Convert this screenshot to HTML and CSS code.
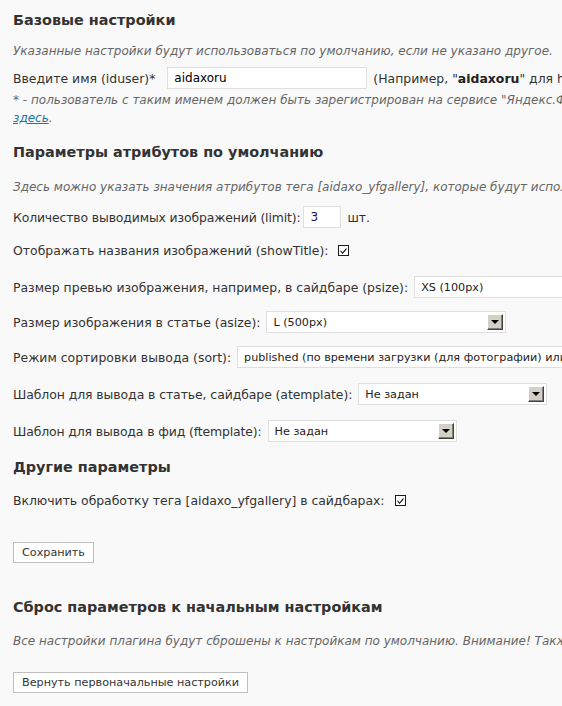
FILE: index.html
```html
<!DOCTYPE html>
<html lang="ru">
<head>
<meta charset="utf-8">
<title>Настройки</title>
<link rel="stylesheet" href="styles.css">
</head>
<body>
<div class="wrap">
  <h3 class="title t1">Базовые настройки</h3>
  <p class="desc d1">Указанные настройки будут использоваться по умолчанию, если не указано другое.</p>
  <div class="row r-user">
    <span class="label">Введите имя (iduser)*</span>
    <span class="input w-user">aidaxoru</span>
    <span class="label">(Например, "<b>aidaxoru</b>" для http://fotki.yandex.ru/users/aidaxoru/)</span>
  </div>
  <p class="desc note">* - пользователь с таким именем должен быть зарегистрирован на сервисе "Яндекс.Фотки". Зарегистрироваться можно<br><a href="#">здесь</a>.</p>

  <h3 class="title t2">Параметры атрибутов по умолчанию</h3>
  <p class="desc d2">Здесь можно указать значения атрибутов тега [aidaxo_yfgallery], которые будут использоваться по умолчанию, если они не указаны в самом теге.</p>
  <div class="row r-limit">
    <span class="label">Количество выводимых изображений (limit):</span>
    <span class="input w-limit">3</span>
    <span class="label">шт.</span>
  </div>
  <div class="row r-show">
    <span class="label">Отображать названия изображений (showTitle):</span>
    <span class="check"><svg width="11" height="11" viewBox="0 0 11 11"><rect x="0.5" y="0.5" width="10" height="10" fill="#fff" stroke="#1c1c1c"/><path d="M2.5 5 L4.5 7.5 L8.5 2.8 L8.5 4.5 L4.5 9 L2.5 6.6 Z" fill="#000"/></svg></span>
  </div>
  <div class="row r-psize">
    <span class="label">Размер превью изображения, например, в сайдбаре (psize):</span>
    <span class="select w-psize"><span class="val">XS (100px)</span><span class="arrow"></span></span>
  </div>
  <div class="row r-asize">
    <span class="label">Размер изображения в статье (asize):</span>
    <span class="select w-asize"><span class="val">L (500px)</span><span class="arrow"></span></span>
  </div>
  <div class="row r-sort">
    <span class="label">Режим сортировки вывода (sort):</span>
    <span class="select w-sort"><span class="val">published (по времени загрузки (для фотографии) или публикации (для альбома))</span><span class="arrow"></span></span>
  </div>
  <div class="row r-atpl">
    <span class="label">Шаблон для вывода в статье, сайдбаре (atemplate):</span>
    <span class="select w-tpl"><span class="val">Не задан</span><span class="arrow"></span></span>
  </div>
  <div class="row r-ftpl">
    <span class="label">Шаблон для вывода в фид (ftemplate):</span>
    <span class="select w-tpl"><span class="val">Не задан</span><span class="arrow"></span></span>
  </div>

  <h3 class="title t3">Другие параметры</h3>
  <div class="row r-side">
    <span class="label">Включить обработку тега [aidaxo_yfgallery] в сайдбарах:</span>
    <span class="check"><svg width="11" height="11" viewBox="0 0 11 11"><rect x="0.5" y="0.5" width="10" height="10" fill="#fff" stroke="#1c1c1c"/><path d="M2.5 5 L4.5 7.5 L8.5 2.8 L8.5 4.5 L4.5 9 L2.5 6.6 Z" fill="#000"/></svg></span>
  </div>
  <div class="btn-row b1"><span class="button">Сохранить</span></div>

  <h3 class="title t4">Сброс параметров к начальным настройкам</h3>
  <p class="desc d4">Все настройки плагина будут сброшены к настройкам по умолчанию. Внимание! Также будет очищен кэш плагина.</p>
  <div class="btn-row b2"><span class="button">Вернуть первоначальные настройки</span></div>
</div>
</body>
</html>
```

FILE: styles.css
```css
html, body {
  margin: 0;
  padding: 0;
  background: #f9f9f9;
  overflow: hidden;
}
body {
  font-family: "DejaVu Sans", Verdana, sans-serif;
  font-size: 12.45px;
  color: #333;
}
.wrap {
  width: 1000px;
  padding: 10px 0 0 13px;
}
.title {
  margin: 0;
  font-size: 14.4px;
  font-weight: bold;
  line-height: 20px;
  color: #333;
  white-space: nowrap;
}
.desc {
  margin: 0;
  font-size: 12px;
  font-style: italic;
  color: #666;
  line-height: 18px;
  white-space: nowrap;
}
.desc a {
  color: #21759b;
}
.row {
  display: flex;
  align-items: center;
  height: 22px;
  white-space: nowrap;
}
.label {
  margin-right: 3px;
}
.label b { color: #222; }
.input {
  box-sizing: border-box;
  height: 22px;
  background: #fff;
  border: 1px solid #dfdfdf;
  padding: 0 6px;
  line-height: 20px;
  color: #000;
  font-size: 12px;
  margin-right: 6px;
}
.w-user { width: 200px; margin-left: 9px; }
.w-limit { width: 38px; color: #101060; }
.r-limit .label:first-child { letter-spacing: -0.15px; }
.r-atpl .label { letter-spacing: -0.08px; }
.r-ftpl .label { letter-spacing: -0.13px; }
.r-side .label { letter-spacing: -0.04px; }
.check { display: flex; margin-left: 7px; }
.select {
  box-sizing: border-box;
  display: flex;
  align-items: center;
  height: 22px;
  margin-left: 3px;
  background: #fff;
  border: 1px solid #dfdfdf;
  padding: 0 1px 0 6px;
  color: #222;
  font-size: 11.2px;
}
.select .val { flex: 1; overflow: hidden; }
.select .arrow {
  box-sizing: border-box;
  width: 16px;
  height: 16px;
  background: #d4d0c8;
  border-top: 1px solid #fff;
  border-left: 1px solid #fff;
  border-right: 1px solid #404040;
  border-bottom: 1px solid #404040;
  box-shadow: inset -1px -1px 0 #808080;
  position: relative;
  flex: none;
  margin-right: 1px;
}
.select .arrow::after {
  content: "";
  position: absolute;
  left: 3px;
  top: 5px;
  border-left: 4px solid transparent;
  border-right: 4px solid transparent;
  border-top: 4px solid #000;
}
.w-psize { width: 300px; }
.w-asize { width: 240px; }
.w-sort { width: 500px; }
.w-tpl { width: 189px; }
.button {
  display: inline-block;
  box-sizing: border-box;
  height: 21px;
  line-height: 19px;
  padding: 0 8px;
  border: 1px solid #c0c0c0;
  background: #fff;
  color: #333;
  font-size: 11.2px;
}
.d1 { margin-top: 12px; }
.r-user { margin-top: 7px; }
.note { margin-top: 2px; }
.t2 { margin-top: 15px; }
.d2 { margin-top: 16px; }
.r-limit { margin-top: 10px; }
.r-show { margin-top: 11px; }
.r-psize { margin-top: 15px; }
.r-asize { margin-top: 13px; }
.r-sort { margin-top: 13px; }
.r-atpl { margin-top: 15px; }
.r-ftpl { margin-top: 15px; }
.t3 { margin-top: 15px; }
.r-side { margin-top: 12px; }
.b1 { margin-top: 31px; }
.t4 { margin-top: 34px; }
.d4 { margin-top: 15px; }
.b2 { margin-top: 22px; }
```
